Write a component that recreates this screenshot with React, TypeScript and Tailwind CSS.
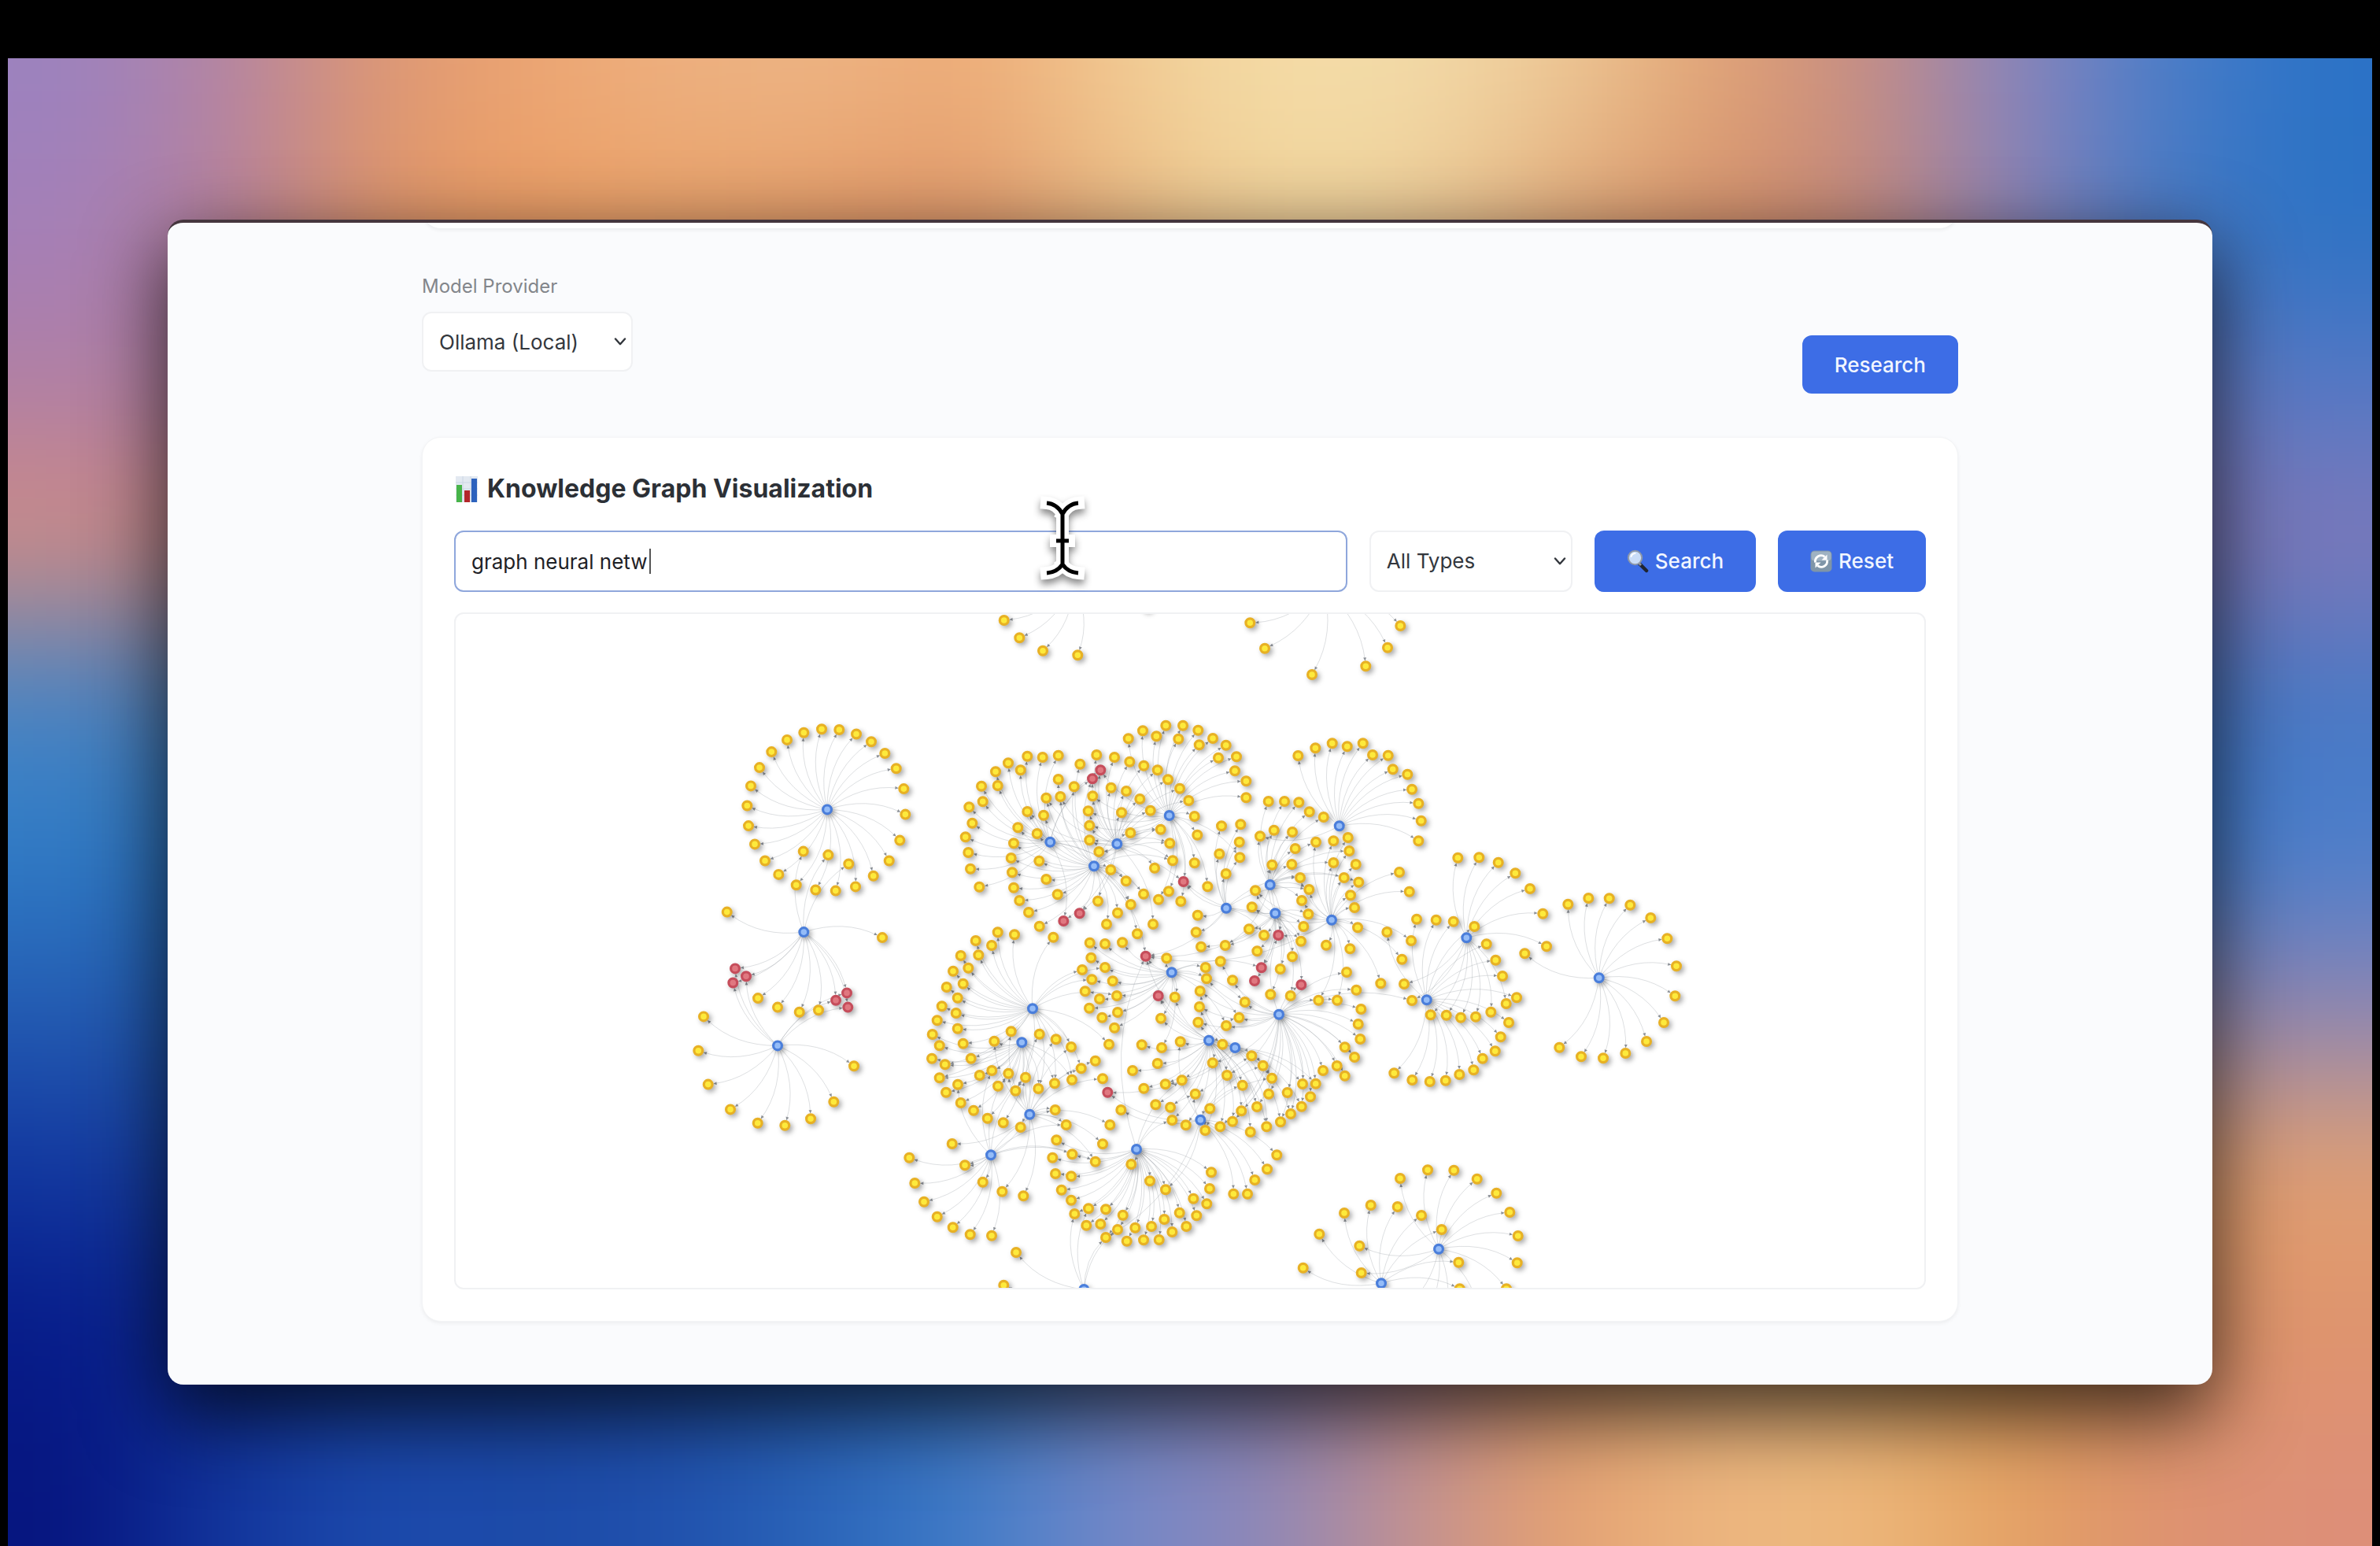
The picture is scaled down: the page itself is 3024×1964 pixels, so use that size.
import React from "react";

type Pt = [number, number];
type Cluster = { hub: Pt; leaves: Pt[]; links?: Pt[] };

/* Converts region-local survey coordinates into canvas coordinates. */
const region = (ox: number, oy: number, sx = 3, sy = 3) => (flat: number[]): Pt[] => {
  const out: Pt[] = [];
  for (let i = 0; i < flat.length; i += 2) out.push([ox + flat[i] / sx, oy + flat[i + 1] / sy]);
  return out;
};

const west = region(860, 880, 3, 2.703);
const northMid = region(1160, 770);
const northEast = region(1500, 770);
const southMid = region(1160, 1160);
const southEast = region(1500, 1160);
const east = region(1740, 1060);
const south = region(1630, 1460);

const reds: Pt[] = [
  ...west([222, 947, 264, 974, 214, 996, 606, 1056, 648, 1031, 652, 1080]),
  ...northMid([715, 625, 684, 658, 1031, 1050, 635, 1171, 574, 1200]),
  ...southMid([887, 164, 935, 315, 742, 683]),
  ...southEast([373, 84, 308, 208, 282, 258, 460, 273]),
];

const clusters: Cluster[] = [
  {
    hub: west([573, 401])[0],
    leaves: west([
      552, 125, 619, 127, 684, 142, 741, 168, 793, 208, 836, 260, 865, 330, 871, 418, 850, 507, 809, 577, 749, 629,
      681, 666, 605, 680, 529, 677, 455, 660, 388, 624, 336, 577, 297, 520, 273, 457, 268, 388, 282, 320, 315, 257,
      361, 203, 420, 162, 484, 137,
    ]),
  },
  {
    hub: west([484, 822])[0],
    leaves: west([482, 545, 577, 557, 655, 588, 191, 753, 783, 841, 309, 1049, 384, 1080, 467, 1097, 540, 1090]),
    links: reds.slice(0, 6),
  },
  {
    hub: west([384, 1212])[0],
    leaves: west([
      102, 1112, 82, 1229, 119, 1345, 204, 1431, 308, 1478, 412, 1486, 510, 1463, 598, 1405, 675, 1282,
    ]),
    links: reds.slice(0, 6),
  },
  { hub: northMid([615, -90])[0], leaves: northMid([347, 54, 406, 121, 495, 170, 628, 187]) },
  { hub: northEast([545, -70])[0], leaves: northEast([265, 64, 321, 161, 501, 261, 706, 229, 789, 158, 838, 75]) },
  {
    hub: northMid([523, 899])[0],
    leaves: northMid([
      200, 880, 214, 766, 261, 686, 315, 631, 363, 598, 436, 572, 494, 576, 554, 569, 226, 827, 211, 939, 219, 1001,
      253, 1070, 266, 745, 323, 684, 410, 625,
    ]),
    links: northMid([684, 658, 715, 625, 574, 1200, 830, 1137, 879, 1097, 1031, 1050, 812, 1048]),
  },
  {
    hub: northMid([690, 991])[0],
    leaves: northMid([
      384, 904, 374, 960, 378, 1015, 384, 1073, 406, 1122, 441, 1167, 482, 1220, 400, 844, 436, 783, 498, 797, 508, 731,
      562, 726, 554, 660, 614, 688, 481, 971, 508, 1041, 551, 1099, 473, 867, 637, 602, 705, 1124, 754, 1005, 812, 1048,
      879, 1097, 830, 1137, 780, 1169, 738, 1212, 855, 1249,
    ]),
    links: [...northMid([684, 658, 979, 904, 990, 970, 905, 779, 944, 851, 635, 1171]), ...southMid([887, 164])],
  },
  {
    hub: northMid([778, 906])[0],
    leaves: northMid([
      700, 567, 768, 576, 826, 593, 880, 608, 932, 625, 972, 661, 1017, 695, 1051, 741, 944, 851, 829, 864, 795, 787,
      905, 779, 865, 735, 813, 705, 755, 692, 685, 724, 668, 781, 673, 836, 673, 892, 709, 936, 921, 998, 979, 904,
      990, 970, 915, 1212,
    ]),
    links: northMid([715, 625, 684, 658, 635, 1171, 574, 1200, 562, 726, 508, 731, 436, 783]),
  },
  {
    hub: northMid([977, 798])[0],
    leaves: [
      ...northMid([
        821, 505, 876, 475, 928, 496, 964, 455, 1029, 455, 1012, 506, 1087, 473, 1091, 529, 1073, 801, 1084, 872, 1073,
        979, 936, 1118, 975, 1087, 1021, 1125,
      ]),
      ...northEast([123, 504, 173, 530, 144, 578, 213, 574, 207, 628, 250, 667, 250, 730, 103, 1069]),
    ],
    links: northMid([1031, 1050, 715, 625, 685, 724, 668, 781, 673, 836, 673, 892, 709, 936, 1246, 958]),
  },
  {
    hub: northEast([605, 838])[0],
    leaves: northEast([
      448, 570, 514, 541, 578, 523, 635, 535, 695, 523, 732, 567, 791, 569, 809, 622, 865, 641, 882, 698, 907, 752, 917,
      818, 907, 895,
    ]),
    links: northEast([303, 877]),
  },
  {
    hub: northEast([341, 1062])[0],
    leaves: northEast([
      335, 744, 396, 744, 451, 748, 491, 784, 545, 804, 303, 877, 356, 854, 426, 861, 437, 924, 424, 984, 349, 986, 456,
      1035, 490, 1080, 462, 1122, 516, 899,
    ]),
    links: [...northEast([643, 933, 583, 978, 623, 1035, 679, 1052]), ...southEast([373, 84, 308, 208, 170, 123])],
  },
  {
    hub: northEast([174, 1151])[0],
    leaves: northEast([156, 838, 229, 832, 224, 899, 148, 944, 226, 958, 173, 1020, 65, 1178, 59, 1243]),
    links: [...northEast([456, 1035, 490, 1080, 13, 1050]), ...southMid([887, 164]), ...southEast([318, 84, 459, 107])],
  },
  {
    hub: northEast([361, 1171])[0],
    leaves: [
      ...northEast([285, 1084, 272, 1147, 261, 1231, 487, 1174, 469, 1221]),
      ...southEast([459, 107, 426, 166, 380, 213, 292, 145, 318, 84, 343, 310, 419, 315, 170, 123, 78, 128]),
    ],
    links: [...northEast([349, 986, 13, 1050]), ...southMid([887, 164]), ...southEast([373, 84, 308, 208, 282, 258, 460, 273])],
  },
  {
    hub: northEast([576, 1196])[0],
    leaves: [
      ...northEast([
        583, 895, 638, 882, 643, 933, 583, 978, 668, 984, 623, 1035, 679, 1052, 648, 1102, 663, 1149, 834, 1014, 872,
        1088,
      ]),
      ...southEast([675, 55, 646, 136, 555, 122, 879, 105, 844, 176, 763, 268]),
    ],
    links: [
      ...northEast([516, 899, 456, 1035, 490, 1080, 462, 1122, 285, 1084, 272, 1147]),
      ...southEast([373, 84, 526, 332, 597, 332]),
      ...southMid([887, 164]),
    ],
  },
  {
    hub: southMid([456, 364])[0],
    leaves: southMid([
      323, 73, 387, 82, 239, 105, 300, 123, 182, 162, 250, 160, 211, 209, 153, 221, 191, 269, 128, 282, 170, 323, 110,
      355, 164, 381, 92, 409, 170, 440, 535, 92, 747, 500, 645, 216, 603, 510, 641, 592, 191, 497, 221, 554,
    ]),
    links: southMid([682, 253, 732, 207, 777, 315, 540, 649, 606, 635, 478, 669, 391, 677, 101, 628, 122, 577]),
  },
  {
    hub: southMid([415, 493])[0],
    leaves: southMid([
      310, 488, 74, 462, 101, 505, 72, 554, 122, 577, 101, 628, 171, 653, 126, 683, 478, 669, 540, 649, 606, 635, 324,
      659, 391, 677, 182, 723, 231, 752, 284, 782, 344, 799, 410, 816, 254, 618, 301, 600,
    ]),
  },
  {
    hub: southMid([445, 767])[0],
    leaves: southMid([
      542, 750, 584, 807, 751, 807, 723, 880, 695, 947, 149, 879, 340, 1061, 421, 1078, 723, 631, 695, 563, 374, 451,
      482, 461, 545, 481, 364, 611, 429, 626,
    ]),
    links: southMid([310, 488, 603, 510, 641, 592, 198, 961]),
  },
  {
    hub: southMid([297, 922])[0],
    leaves: southMid([-14, 932, 7, 1029, 42, 1100, 92, 1157, 152, 1198, 218, 1225, 300, 1229, 198, 961, 266, 1025]),
    links: southMid([171, 653, 301, 600, 364, 611, 429, 626, 584, 807, 607, 919, 542, 750, 695, 947]),
  },
  {
    hub: southMid([852, 900])[0],
    leaves: southMid([
      832, 957, 903, 1021, 963, 1054, 547, 865, 532, 932, 543, 993, 566, 1055, 603, 1094, 616, 1146, 661, 1190, 715,
      1185, 669, 1126, 735, 1129, 800, 1151, 735, 1236, 780, 1206, 815, 1250, 847, 1199, 879, 1246, 909, 1194, 938,
      1245, 958, 1167, 988, 1215, 1016, 1142, 1042, 1194, 1081, 1153, 1069, 1088, 1120, 1108, 1131, 1050, 1137, 988,
      607, 919, 603, 1003,
    ]),
    links: southMid([887, 164, 1025, 637, 1076, 689, 988, 789]),
  },
  {
    hub: southMid([986, 226])[0],
    leaves: southMid([
      674, 113, 679, 170, 732, 207, 682, 253, 761, 259, 656, 298, 711, 327, 777, 315, 672, 362, 780, 378, 721, 398, 768,
      437, 732, 117, 798, 112, 998, 320, 967, 172, 1115, 207, 1119, 250, 945, 401, 948, 513,
    ]),
    links: [...southMid([887, 164]), ...southEast([245, 339, 223, 398, 174, 429, 308, 208])],
  },
  {
    hub: southMid([1128, 485])[0],
    leaves: [
      ...southMid([
        872, 502, 1019, 490, 932, 573, 837, 600, 880, 668, 962, 652, 1025, 637, 925, 730, 981, 740, 988, 789, 1040, 808,
      ]),
      ...southEast([160, 500, 122, 571, 177, 618, 236, 656, 266, 834, 291, 738, 232, 754, 198, 794, 151, 814]),
    ],
    links: [...southMid([935, 315, 998, 320, 887, 164, 945, 401, 1113, 828]), ...southEast([223, 398, 348, 629, 328, 814])],
  },
  {
    hub: southEast([208, 513])[0],
    leaves: [...southEast([271, 544, 314, 581, 348, 629, 328, 814]), ...southMid([1094, 297, 1092, 357, 1087, 416])],
    links: [
      ...southEast([381, 796, 420, 765, 461, 737, 515, 650, 465, 651]),
      ...southMid([742, 683, 935, 315, 1076, 689, 962, 652]),
    ],
  },
  {
    hub: southEast([76, 788])[0],
    leaves: [
      ...southEast([367, 922, 330, 976, 283, 1017, 255, 1070, 202, 1070, 112, 745, 94, 828]),
      ...southMid([793, 750, 1076, 689]),
    ],
    links: [...southEast([271, 544, 314, 581, 348, 629, 236, 656]), ...southMid([742, 683, 1019, 490, 963, 1054, 735, 1236])],
  },
  {
    hub: southEast([375, 386])[0],
    leaves: southEast([
      245, 339, 223, 398, 174, 429, 526, 332, 597, 332, 633, 225, 670, 293, 688, 366, 677, 423, 685, 480, 626, 511, 663,
      549, 596, 582, 626, 620, 543, 600, 515, 650, 465, 651, 495, 700, 407, 684, 461, 737, 420, 765, 381, 796, 336, 689,
      198, 256, 152, 184, 882, 333,
    ]),
    links: [
      ...southEast([460, 273, 373, 84, 291, 738, 232, 754, 198, 794, 151, 814, 122, 571, 177, 618]),
      ...southMid([1094, 297, 1092, 357, 1087, 416, 1119, 250]),
    ],
  },
  {
    hub: east([370, 394])[0],
    leaves: east([
      337, 89, 418, 88, 491, 107, 556, 148, 612, 207, 661, 302, 675, 427, 521, 645, 463, 677, 405, 695, 348, 698, 293,
      689, 233, 688, 132, 570,
    ]),
    links: east([163, 633]),
  },
  {
    hub: east([218, 631])[0],
    leaves: east([
      180, 323, 254, 326, 320, 332, 400, 351, 446, 418, 481, 479, 507, 540, 561, 622, 531, 717, 500, 772, 479, 826, 431,
      854, 397, 898, 343, 915, 290, 938, 230, 942, 163, 936, 94, 910, 67, 372,
    ]),
  },
  {
    hub: east([875, 547])[0],
    leaves: east([
      757, 266, 835, 243, 914, 244, 994, 269, 1072, 318, 1135, 397, 1170, 502, 1165, 616, 1122, 717, 1056, 789, 976,
      834, 891, 853, 807, 847, 724, 812, 592, 454,
    ]),
  },
  {
    hub: south([594, 380])[0],
    leaves: south([
      447, 111, 552, 79, 652, 80, 740, 113, 814, 167, 865, 240, 896, 330, 893, 433, 852, 532, 292, 368, 299, 471, 440,
      620, 520, 660, 600, 680, 750, 640,
    ]),
  },
  {
    hub: south([375, 511])[0],
    leaves: south([
      77, 452, 139, 323, 234, 243, 335, 213, 437, 219, 528, 252, 605, 306, 670, 431, 674, 532,
    ]),
  },
  {
    hub: southMid([652, 1434])[0],
    leaves: southMid([393, 1293, 346, 1418]),
    links: southMid([616, 1146, 669, 1126, 735, 1236, 780, 1206]),
  },
];

const n = (v: number) => v.toFixed(1);

/* Every edge bows to the left of its direction of travel and ends in a small arrow. */
function buildEdges() {
  let lines = "";
  let arrows = "";
  for (const c of clusters) {
    const [hx, hy] = c.hub;
    for (const [lx, ly] of [...c.leaves, ...(c.links ?? [])]) {
      const dx = lx - hx;
      const dy = ly - hy;
      const cx = (hx + lx) / 2 + dy * 0.2;
      const cy = (hy + ly) / 2 - dx * 0.2;
      const ex = lx - cx;
      const ey = ly - cy;
      const len = Math.hypot(ex, ey) || 1;
      const ux = ex / len;
      const uy = ey / len;
      const tx = lx - ux * 7;
      const ty = ly - uy * 7;
      lines += `M${n(hx)} ${n(hy)}Q${n(cx)} ${n(cy)} ${n(tx)} ${n(ty)}`;
      const bx = tx - ux * 4;
      const by = ty - uy * 4;
      arrows += `M${n(tx)} ${n(ty)}L${n(bx - uy * 2)} ${n(by + ux * 2)}L${n(bx + uy * 2)} ${n(by - ux * 2)}Z`;
    }
  }
  return { lines, arrows };
}

const edges = buildEdges();

function Dots({ points, fill, stroke }: { points: Pt[]; fill: string; stroke: string }) {
  return (
    <g fill={fill} stroke={stroke} strokeWidth={3.2}>
      {points.map(([x, y], i) => (
        <circle key={i} cx={n(x)} cy={n(y)} r={5.4} />
      ))}
    </g>
  );
}

function KnowledgeGraph() {
  return (
    <svg
      viewBox="579 780 1866 856"
      className="block h-[856px] w-full"
      role="img"
      aria-label="Knowledge graph"
    >
      <defs>
        <filter id="nodeShadow" x="-5%" y="-5%" width="110%" height="110%" colorInterpolationFilters="sRGB">
          <feDropShadow dx="3" dy="3" stdDeviation="3" floodColor="#000" floodOpacity="0.34" />
        </filter>
      </defs>
      <path d={edges.lines} fill="none" stroke="#969aa2" strokeOpacity={0.32} strokeWidth={1} />
      <path d={edges.arrows} fill="#6b7078" fillOpacity={0.75} />
      <g filter="url(#nodeShadow)">
        <Dots points={clusters.flatMap((c) => c.leaves)} fill="#fdea3c" stroke="#e8b124" />
        <Dots points={northMid([890, 0])} fill="#fdea3c" stroke="#e8b124" />
        <Dots points={reds} fill="#e07880" stroke="#c64d5b" />
        <Dots points={clusters.map((c) => c.hub)} fill="#94bcf8" stroke="#4a7edb" />
      </g>
    </svg>
  );
}

const wallpaper: string[][] = [
  ["#9b82bf", "#b283a4", "#dc9674", "#eca572", "#edb080", "#edb585", "#edaa76", "#f1c992", "#f4dca6", "#f3dba9", "#edc896", "#e2a475", "#c98d80", "#8d84bc", "#4d7ec8", "#2b72c6"],
  ["#a47fb8", "#b47f9c", "#dc9468", "#ec9c60", "#e8a066", "#e49a64", "#dc9468", "#e8b880", "#f0d49a", "#eccf98", "#e0a878", "#d49068", "#c48878", "#9082b4", "#4478c2", "#2c72c4"],
  ["#b07fa4", "#b07fa4", "#c08070", "#c08070", "#c08070", "#c08070", "#c08070", "#c08070", "#c08070", "#c08070", "#c08070", "#c08070", "#c08070", "#7a7cb4", "#6c7ac0", "#5478c4"],
  ["#d08c82", "#c48480", "#c48480", "#c48480", "#c48480", "#c48480", "#c48480", "#c48480", "#c48480", "#c48480", "#c48480", "#c48480", "#c48480", "#7a6ca4", "#7a70a8", "#8078b8"],
  ["#4884c4", "#4a78ae", "#4a78ae", "#4a78ae", "#4a78ae", "#4a78ae", "#4a78ae", "#4a78ae", "#4a78ae", "#4a78ae", "#4a78ae", "#4a78ae", "#4a78ae", "#4a70b8", "#4470b8", "#4878c4"],
  ["#2f7cc6", "#2a6cb4", "#2a6cb4", "#2a6cb4", "#2a6cb4", "#2a6cb4", "#2a6cb4", "#2a6cb4", "#2a6cb4", "#2a6cb4", "#2a6cb4", "#2a6cb4", "#2a6cb4", "#3a78c8", "#3a78c8", "#4a7ecc"],
  ["#245cb2", "#2258aa", "#2258aa", "#2258aa", "#2258aa", "#2258aa", "#2258aa", "#2258aa", "#2258aa", "#2258aa", "#2258aa", "#2258aa", "#2258aa", "#8a80a8", "#8a80a8", "#8c84b4"],
  ["#1238a0", "#1a429c", "#1a429c", "#1a429c", "#1a429c", "#1a429c", "#1a429c", "#1a429c", "#1a429c", "#1a429c", "#1a429c", "#1a429c", "#d89868", "#d89868", "#de9c6a", "#e0a074"],
  ["#071c8a", "#0c2a92", "#143a9c", "#163c9c", "#1c4aa6", "#2458b0", "#2e68b8", "#6a80c0", "#8a80b0", "#b88890", "#e0a070", "#ecb47c", "#ecb474", "#e4a058", "#de9464", "#de946c"],
  ["#06157f", "#12359c", "#1c4aac", "#1c4aa8", "#2050ac", "#2a64b8", "#3e7cc8", "#7488c8", "#8c86b8", "#c49090", "#e4a070", "#ecb680", "#edb87c", "#e4a262", "#dd9270", "#dd8f78"],
];

/* Soft gradient wallpaper: a coarse colour grid under a wide blur. */
function Wallpaper() {
  return (
    <svg
      viewBox="5 38 1558 980"
      preserveAspectRatio="none"
      className="absolute inset-0 size-full"
      aria-hidden="true"
    >
      <defs>
        <filter
          id="soften"
          filterUnits="userSpaceOnUse"
          x="-300"
          y="-300"
          width="2168"
          height="1618"
          colorInterpolationFilters="sRGB"
        >
          <feGaussianBlur stdDeviation="48" />
        </filter>
      </defs>
      <g filter="url(#soften)">
        {wallpaper.map((row, r) =>
          row.map((color, c) => {
            const x0 = c === 0 ? -300 : c * 98;
            const x1 = c === 15 ? 1868 : c * 98 + 99;
            const y0 = r === 0 ? -300 : r * 102;
            const y1 = r === 9 ? 1318 : r * 102 + 103;
            return <rect key={`${r}-${c}`} x={x0} y={y0} width={x1 - x0} height={y1 - y0} fill={color} />;
          }),
        )}
      </g>
    </svg>
  );
}

function Chevron() {
  return (
    <svg
      viewBox="0 0 16 10"
      className="pointer-events-none absolute top-1/2 right-2 h-[10px] w-4 -translate-y-1/2"
      fill="none"
      stroke="#33373d"
      strokeWidth={2.4}
      strokeLinecap="round"
      strokeLinejoin="round"
      aria-hidden="true"
    >
      <path d="M2 1.5 8 8.2 14 1.5" />
    </svg>
  );
}

function BarChartIcon() {
  return (
    <svg viewBox="0 0 28 33" className="h-[33px] w-7" aria-hidden="true">
      <rect width="28" height="33" fill="#e3e9f1" />
      <path d="M0 8H28M0 16H28M0 24H28M9 0V33M19 0V33" stroke="#cbd6e4" strokeWidth="1" />
      <rect x="1" y="11" width="7" height="22" fill="#47b449" />
      <rect x="11" y="18" width="7" height="15" fill="#b3262a" />
      <rect x="20" y="3" width="7" height="30" fill="#2d62bd" />
    </svg>
  );
}

function MagnifierIcon() {
  return (
    <svg viewBox="0 0 28 30" className="h-[30px] w-7" aria-hidden="true">
      <path d="M15 17 25 27" stroke="#1f2430" strokeWidth="4.5" strokeLinecap="round" />
      <path d="M14 16 18 20" stroke="#8d949e" strokeWidth="3" />
      <circle cx="10.5" cy="10.5" r="8.7" fill="#c9dcf8" stroke="#8e98a8" strokeWidth="2" />
      <path d="M5.5 9a5.5 5.5 0 0 1 5-4" fill="none" stroke="#fff" strokeWidth="2" strokeLinecap="round" />
    </svg>
  );
}

function RefreshIcon() {
  return (
    <svg viewBox="0 0 28 28" className="size-7" aria-hidden="true">
      <rect x="0.5" y="0.5" width="27" height="27" rx="5" fill="#7f95a8" />
      <rect x="1.5" y="1.5" width="25" height="12" rx="4" fill="#9fb2c2" />
      <g fill="none" stroke="#fff" strokeWidth="2.8">
        <path d="M6.5 15.5a7.5 7.5 0 0 1 12-7.2" />
        <path d="M21.5 12.5a7.5 7.5 0 0 1-12 7.2" />
      </g>
      <path d="M21.5 5.5v7h-7zM6.5 22.5v-7h7z" fill="#fff" />
    </svg>
  );
}

function TextCursor() {
  const shape = "M7 8Q20 9 27 22V86Q20 96 7 97M47 8Q34 9 27 22M27 86Q34 96 47 97M19 56H35";
  return (
    <svg
      viewBox="0 0 54 108"
      className="pointer-events-none absolute -top-[43px] left-[746px] h-[108px] w-[54px] overflow-visible drop-shadow-[0_6px_5px_rgba(0,0,0,0.45)]"
      fill="none"
      aria-hidden="true"
    >
      <path d={shape} stroke="#fff" strokeWidth="16" strokeLinecap="square" />
      <path d={shape} stroke="#000" strokeWidth="5" />
    </svg>
  );
}

export default function App() {
  return (
    <div className="flex min-h-screen flex-col bg-black px-[10px] pt-[74px] font-['Inter','Liberation_Sans',sans-serif] text-[26px] leading-8 text-[#33373d]">
      <div className="relative flex-1 overflow-hidden px-[203px] pt-[205px] pb-[205px]">
        <Wallpaper />
        <main className="relative overflow-hidden rounded-[20px] border-t-4 border-[#45363e] bg-[#fafbfd] px-[323px] pb-20 shadow-[0_36px_100px_4px_rgba(0,0,0,0.72)]">
          <div className="-mt-12 h-14 rounded-b-3xl border border-[#eff0f2] bg-white shadow-[0_2px_4px_rgba(0,0,0,0.05)]" />

          <section className="mt-[57px] flex items-end justify-between">
            <div className="pb-7">
              <label htmlFor="provider" className="block text-2xl leading-8 text-[#83868b]">
                Model Provider
              </label>
              <div className="relative mt-4">
                <select
                  id="provider"
                  className="h-[76px] w-[268px] appearance-none rounded-xl border-2 border-[#f0f1f3] bg-white pt-0.5 pl-5"
                >
                  <option>Ollama (Local)</option>
                </select>
                <Chevron />
              </div>
            </div>
            <button type="button" className="h-[74px] rounded-xl bg-[#3d6de6] px-[41px] pt-0.5 font-medium text-[#f2f6ff]">
              Research
            </button>
          </section>

          <section className="mt-[55px] rounded-3xl border border-[#f3f4f6] bg-white p-10 shadow-[0_2px_5px_rgba(0,0,0,0.06)]">
            <h2 className="mb-7 flex items-center gap-3 pl-0.5 text-[32px] leading-[50px] font-bold text-[#2c3036]">
              <BarChartIcon />
              Knowledge Graph Visualization
            </h2>
            <div className="mb-[26px] flex gap-7">
              <div className="relative flex-1">
                <input
                  type="text"
                  aria-label="Search nodes"
                  defaultValue="graph neural netw"
                  className="h-[78px] w-full rounded-xl border-2 border-[#8fa7dc] bg-white px-5 text-[#1e2126] outline-none"
                />
                <span className="absolute top-[23px] left-[248px] h-8 w-0.5 bg-[#555]" />
                <TextCursor />
              </div>
              <div className="relative">
                <select
                  aria-label="Node type"
                  className="h-[78px] w-[258px] appearance-none rounded-xl border-2 border-[#f0f1f3] bg-white pl-5"
                >
                  <option>All Types</option>
                </select>
                <Chevron />
              </div>
              <button
                type="button"
                className="flex h-[78px] items-center gap-2 rounded-xl bg-[#3d6de6] px-[41px] font-medium text-[#f2f6ff]"
              >
                <MagnifierIcon />
                Search
              </button>
              <button
                type="button"
                className="flex h-[78px] items-center gap-2 rounded-xl bg-[#3d6de6] px-[41px] font-medium text-[#f2f6ff]"
              >
                <RefreshIcon />
                Reset
              </button>
            </div>
            <div className="overflow-hidden rounded-xl border-2 border-[#f0f1f3] bg-white">
              <KnowledgeGraph />
            </div>
          </section>
        </main>
      </div>
    </div>
  );
}
